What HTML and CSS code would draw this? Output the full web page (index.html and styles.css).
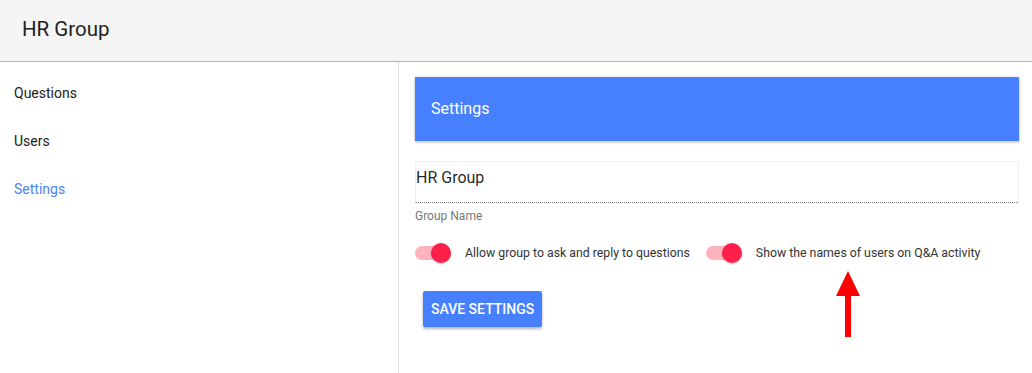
FILE: index.html
```html
<html>
<head>
    <meta http-equiv="Content-Type" content="text/html;charset=utf-8">
    <link rel="stylesheet" href="styles.css">
</head>
<body>
    <div id="header">HR Group</div>
    <div id="wrap">
        <div id="sidebar">
            <div class="navitem">Questions</div>
            <div class="navitem">Users</div>
            <div class="navitem active">Settings</div>
        </div>
        <div id="main">
            <div class="cardhead">Settings</div>
            <div class="field">
                <div class="fieldbox">HR Group</div>
                <div class="fieldlabel">Group Name</div>
            </div>
            <div class="toggles">
                <div class="toggle"><span class="switch"><span class="track"></span><span class="thumb"></span></span><span class="tlabel">Allow group to ask and reply to questions</span></div>
                <div class="toggle"><span class="switch"><span class="track"></span><span class="thumb"></span></span><span class="tlabel">Show the names of users on Q&amp;A activity</span></div>
            </div>
            <div class="btnrow"><div class="savebtn">SAVE SETTINGS</div></div>
            <svg class="arrow" width="30" height="70" viewBox="0 0 30 70">
                <polygon points="15,0 27,25 3,25" fill="#ff0000"/>
                <rect x="12" y="24" width="6" height="42" fill="#ff0000"/>
            </svg>
        </div>
    </div>
</body>
</html>
```

FILE: styles.css
```css
body {
    margin: 0;
    font-family: Roboto, "Liberation Sans", sans-serif;
    color: rgba(0,0,0,0.87);
    background: #fff;
}

#header {
    height: 61px;
    line-height: 58px;
    padding-left: 22px;
    font-size: 20.5px;
    background-color: #f5f5f5;
    border-bottom: 1px solid #b4b4b4;
    color: #222;
}

#wrap {
    display: flex;
    height: 311px;
}

#sidebar {
    width: 398px;
    flex-shrink: 0;
    border-right: 1px solid #dcdcdc;
    padding-top: 7px;
}

.navitem {
    height: 48px;
    line-height: 48px;
    padding-left: 14px;
    font-size: 14px;
    color: #222;
}

.navitem.active {
    color: #4a85f7;
}

#main {
    flex: 1;
    position: relative;
    padding: 15px 13px 0 16px;
}

.cardhead {
    height: 64px;
    line-height: 64px;
    padding-left: 16px;
    font-size: 16px;
    color: #fff;
    background-color: #4680ff;
    box-shadow: 0 1px 3px rgba(0,0,0,0.3);
}

.field {
    margin-top: 20px;
}

.fieldbox {
    height: 40px;
    line-height: 31px;
    font-size: 16px;
    color: rgba(0,0,0,0.87);
    border: 1px solid #f0f0f0;
    border-bottom: 1px dotted #777;
    border-radius: 3px 3px 0 0;
}

.fieldlabel {
    margin-top: 6px;
    font-size: 12px;
    color: #777;
}

.toggles {
    display: flex;
    align-items: center;
    margin-top: 20px;
    height: 20px;
}

.toggle {
    display: flex;
    align-items: center;
    flex-shrink: 0;
    margin-right: 16px;
}

.switch {
    position: relative;
    width: 36px;
    height: 20px;
    flex-shrink: 0;
}

.track {
    position: absolute;
    left: 0;
    top: 3px;
    width: 34px;
    height: 14px;
    border-radius: 7px;
    background-color: #ffb3bd;
}

.thumb {
    position: absolute;
    right: 0;
    top: 0;
    width: 20px;
    height: 20px;
    border-radius: 50%;
    background-color: #ff1f4b;
    box-shadow: 0 1px 2px rgba(0,0,0,0.25);
}

.tlabel {
    margin-left: 14px;
    font-size: 12.3px;
    color: #333;
    white-space: nowrap;
}

.btnrow {
    margin-top: 28px;
    padding-left: 8px;
}

.savebtn {
    display: inline-block;
    height: 36px;
    line-height: 36px;
    padding: 0 8px;
    font-size: 14px;
    font-weight: 500;
    color: #fff;
    background-color: #4680ff;
    border-radius: 2px;
    box-shadow: 0 2px 3px rgba(0,0,0,0.3);
}

.arrow {
    position: absolute;
    left: 434px;
    top: 209px;
}
```
